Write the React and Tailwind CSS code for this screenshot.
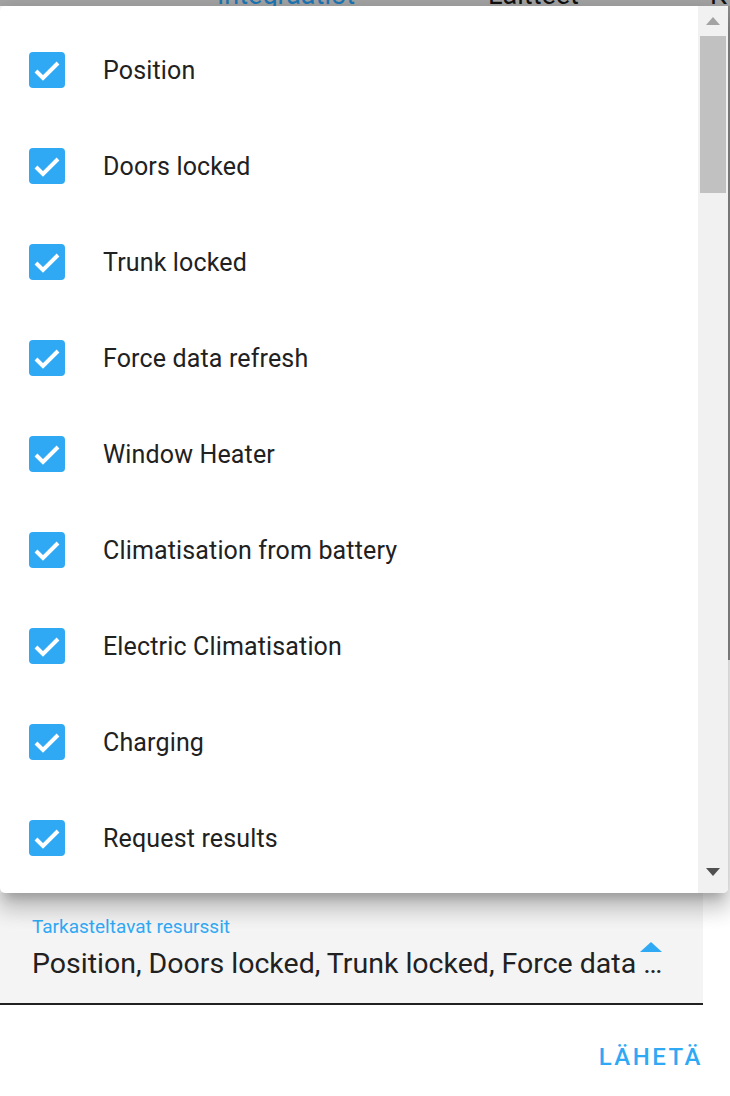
import React from "react";

const items = [
  "Position",
  "Doors locked",
  "Trunk locked",
  "Force data refresh",
  "Window Heater",
  "Climatisation from battery",
  "Electric Climatisation",
  "Charging",
  "Request results",
];

function Check() {
  return (
    <div className="w-[36px] h-[36px] rounded-[4px] bg-[#30a9f5] flex items-center justify-center shrink-0">
      <svg width="36" height="36" viewBox="0 0 36 36">
        <polyline points="7,19 14,26 29,11" fill="none" stroke="white" strokeWidth="4" />
      </svg>
    </div>
  );
}

export default function App() {
  return (
    <div
      className="relative w-[730px] h-[1096px] bg-white overflow-hidden"
      style={{ fontFamily: "Roboto, 'Noto Sans', sans-serif" }}
    >
      {/* page header, mostly hidden under the menu */}
      <div className="relative h-[6px] bg-[#a5a5a5] overflow-hidden">
        <span className="absolute left-[217px] bottom-[-3px] text-[27px] leading-none text-[#1c78b6]">Integraatiot</span>
        <span className="absolute left-[488px] bottom-[-3px] text-[27px] leading-none text-[#111]">Laitteet</span>
        <span className="absolute left-[710px] bottom-[-3px] text-[27px] leading-none text-[#111]">K</span>
      </div>

      {/* page body under the menu */}
      <div className="h-[887px] flex justify-end">
        <div className="w-[2px] h-[654px] bg-[#8f8f8f]" />
      </div>

      {/* select field */}
      <div className="w-[703px] h-[112px] bg-[#f4f4f4] border-b-2 border-[#212121] px-[32px] pt-[22px] relative">
        <div className="text-[19px] leading-[24px] text-[#30a9f5]">Tarkasteltavat resurssit</div>
        <div className="mt-[7px] text-[28.5px] leading-[36px] text-[#212121] whitespace-nowrap">
          Position, Doors locked, Trunk locked, Force data …
        </div>
        <svg className="absolute left-[640px] top-[49px]" width="22" height="10" viewBox="0 0 22 10">
          <polygon points="0,10 11,0 22,10" fill="#30a9f5" />
        </svg>
      </div>

      {/* action */}
      <div className="w-[703px] flex justify-end pt-[38px]">
        <span className="text-[24px] leading-[28px] font-medium tracking-[2.5px] text-[#30a9f5]">LÄHETÄ</span>
      </div>

      {/* dropdown menu */}
      <div className="absolute left-0 top-[6px] w-[728px] h-[887px] bg-white rounded-[5px] overflow-hidden flex shadow-[0_10px_10px_-6px_rgba(0,0,0,0.2),0_16px_20px_2px_rgba(0,0,0,0.14),0_6px_28px_4px_rgba(0,0,0,0.12)]">
        <div className="flex-1 pt-[16px]">
          {items.map((t) => (
            <div key={t} className="h-[96px] flex items-center pl-[29px]">
              <Check />
              <span className="ml-[38px] mt-[2px] text-[25px] tracking-[0.15px] text-[#212121]">{t}</span>
            </div>
          ))}
        </div>
        <div className="w-[30px] bg-[#f1f1f1] flex flex-col items-center">
          <div className="h-[30px] flex items-center justify-center">
            <svg width="14" height="8" viewBox="0 0 14 8">
              <polygon points="0,8 7,0 14,8" fill="#a3a3a3" />
            </svg>
          </div>
          <div className="w-[26px] h-[157px] bg-[#c1c1c1]" />
          <div className="flex-1" />
          <div className="h-[28px] flex items-start justify-center pt-[3px]">
            <svg width="14" height="8" viewBox="0 0 14 8">
              <polygon points="0,0 14,0 7,8" fill="#505050" />
            </svg>
          </div>
        </div>
      </div>
    </div>
  );
}
